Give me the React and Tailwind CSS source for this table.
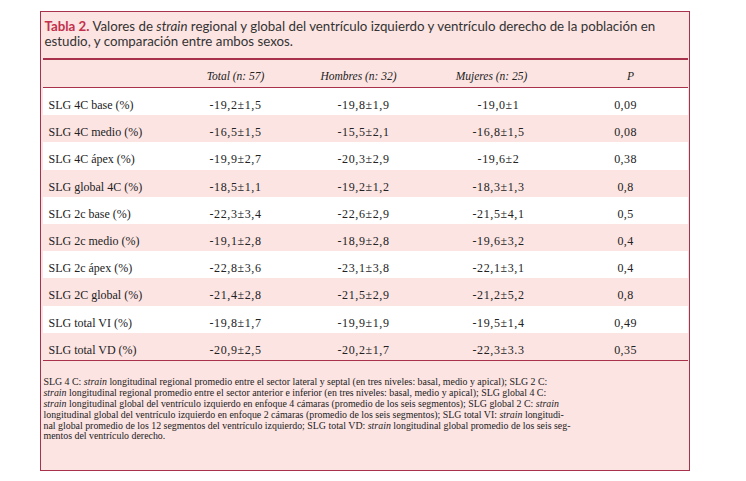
const rows = [
  ["SLG 4C base (%)", "-19,2±1,5", "-19,8±1,9", "-19,0±1", "0,09"],
  ["SLG 4C medio (%)", "-16,5±1,5", "-15,5±2,1", "-16,8±1,5", "0,08"],
  ["SLG 4C ápex (%)", "-19,9±2,7", "-20,3±2,9", "-19,6±2", "0,38"],
  ["SLG global 4C (%)", "-18,5±1,1", "-19,2±1,2", "-18,3±1,3", "0,8"],
  ["SLG 2c base (%)", "-22,3±3,4", "-22,6±2,9", "-21,5±4,1", "0,5"],
  ["SLG 2c medio (%)", "-19,1±2,8", "-18,9±2,8", "-19,6±3,2", "0,4"],
  ["SLG 2c ápex (%)", "-22,8±3,6", "-23,1±3,8", "-22,1±3,1", "0,4"],
  ["SLG 2C global (%)", "-21,4±2,8", "-21,5±2,9", "-21,2±5,2", "0,8"],
  ["SLG total VI (%)", "-19,8±1,7", "-19,9±1,9", "-19,5±1,4", "0,49"],
  ["SLG total VD (%)", "-20,9±2,5", "-20,2±1,7", "-22,3±3.3", "0,35"],
];

const cols = "grid grid-cols-[133px_120px_136px_134px_120px]";

export default function App() {
  return (
    <div className="w-[746px] h-[481px] bg-white pl-[40px] pt-[11px]">
      <div className="w-[650px] h-[460px] border-[1.5px] border-[#a8324c] bg-[#fce4e2] px-[1.5px] text-[#222]">
        <div className="h-[46px] pl-[2px] pt-[7px] font-['Lato',sans-serif] text-[13.3px] leading-[15px] text-[#333] whitespace-nowrap">
          <span className="font-bold text-[#c2304c]">Tabla 2.</span> Valores de <i>strain</i> regional y global del ventrículo izquierdo y ventrículo derecho de la población en
          <br />
          estudio, y comparación entre ambos sexos.
        </div>
        <div className="h-[1.5px] bg-[#a8324c]" />

        <div className="font-['Liberation_Serif',serif]">
          <div className={`${cols} h-[27px] items-center pt-[8px] text-[11.5px] italic`}>
            <div />
            <div className="text-center">Total (n: 57)</div>
            <div className="text-center pr-[10px]">Hombres (n: 32)</div>
            <div className="text-center pr-[14px]">Mujeres (n: 25)</div>
            <div className="text-center pl-[10px]">P</div>
          </div>
          <div className="h-[1.5px] bg-[#a8324c]" />

          {rows.map((r, i) => (
            <div
              key={r[0]}
              className={`${cols} h-[27.2px] items-center pt-[7px] text-[12px] ${i % 2 === 0 ? "bg-white" : ""}`}
            >
              <div className="pl-[6px] whitespace-nowrap">{r[0]}</div>
              <div className="text-center tracking-[0.6px]">{r[1]}</div>
              <div className="text-center tracking-[0.6px]">{r[2]}</div>
              <div className="text-center tracking-[0.6px]">{r[3]}</div>
              <div className="text-center tracking-[0.4px]">{r[4]}</div>
            </div>
          ))}
          <div className="h-[1.5px] bg-[#a8324c]" />

          <div className="pl-[1px] pt-[16px] text-[9.9px] leading-[10.8px] whitespace-nowrap">
            <div>SLG 4 C: <i>strain</i> longitudinal regional promedio entre el sector lateral y septal (en tres niveles: basal, medio y apical); SLG 2 C:</div>
            <div><i>strain</i> longitudinal regional promedio entre el sector anterior e inferior (en tres niveles: basal, medio y apical); SLG global 4 C:</div>
            <div><i>strain</i> longitudinal global del ventrículo izquierdo en enfoque 4 cámaras (promedio de los seis segmentos); SLG global 2 C: <i>strain</i></div>
            <div>longitudinal global del ventrículo izquierdo en enfoque 2 cámaras (promedio de los seis segmentos); SLG total VI: <i>strain</i> longitudi-</div>
            <div>nal global promedio de los 12 segmentos del ventrículo izquierdo; SLG total VD: <i>strain</i> longitudinal global promedio de los seis seg-</div>
            <div>mentos del ventrículo derecho.</div>
          </div>
        </div>
      </div>
    </div>
  );
}
